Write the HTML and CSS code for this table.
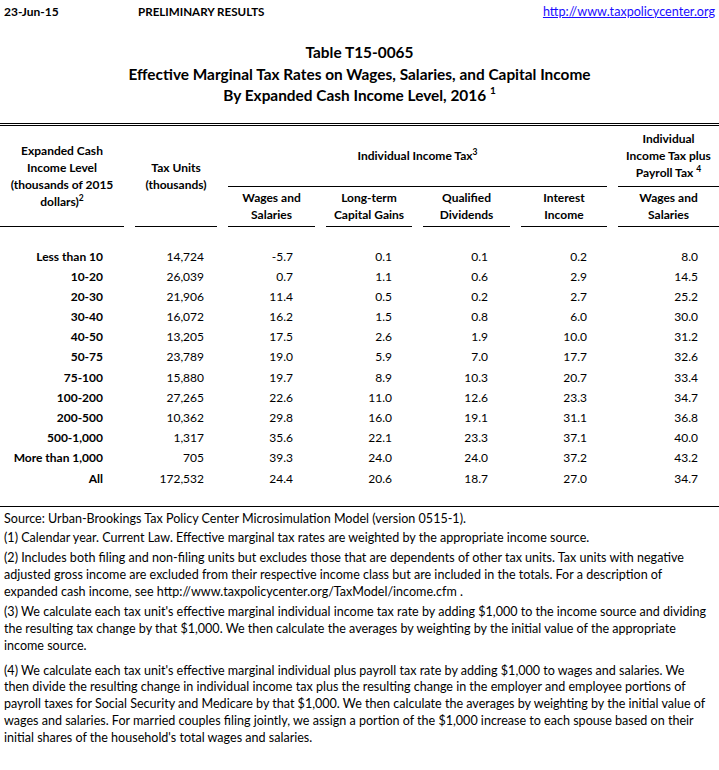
FILE: index.html
```html
<!DOCTYPE html>
<html>
<head>
<meta charset="utf-8">
<link rel="stylesheet" href="styles.css">
</head>
<body>
<div class="page">
  <div class="topbar">
    <span class="date">23-Jun-15</span>
    <span class="prelim">PRELIMINARY RESULTS</span>
    <a class="link" href="#">http://www.taxpolicycenter.org</a>
  </div>

  <div class="title">
    <div>Table T15-0065</div>
    <div>Effective Marginal Tax Rates on Wages, Salaries, and Capital Income</div>
    <div>By Expanded Cash Income Level, 2016 <sup>1</sup></div>
  </div>

  <div class="double-rule"></div>

  <div class="head">
    <div class="hc h-level"><span>Expanded Cash<br>Income Level<br>(thousands of 2015<br>dollars)<sup>2</sup></span></div>
    <div class="hc h-units"><span>Tax Units<br>(thousands)</span></div>
    <div class="hc h-iit"><span>Individual Income Tax<sup>3</sup></span></div>
    <div class="hc h-pay"><span>Individual<br>Income Tax plus<br>Payroll Tax <sup>4</sup></span></div>
    <div class="hc h-sub"><span>Wages and<br>Salaries</span></div>
    <div class="hc h-sub"><span>Long-term<br>Capital Gains</span></div>
    <div class="hc h-sub"><span>Qualified<br>Dividends</span></div>
    <div class="hc h-sub"><span>Interest<br>Income</span></div>
    <div class="hc h-sub"><span>Wages and<br>Salaries</span></div>
  </div>

  <div class="body">
    <div class="row"><div class="lab">Less than 10</div><div class="c2">14,724</div><div class="c3">-5.7</div><div class="c4">0.1</div><div class="c5">0.1</div><div class="c6">0.2</div><div class="c7">8.0</div></div>
    <div class="row"><div class="lab">10-20</div><div class="c2">26,039</div><div class="c3">0.7</div><div class="c4">1.1</div><div class="c5">0.6</div><div class="c6">2.9</div><div class="c7">14.5</div></div>
    <div class="row"><div class="lab">20-30</div><div class="c2">21,906</div><div class="c3">11.4</div><div class="c4">0.5</div><div class="c5">0.2</div><div class="c6">2.7</div><div class="c7">25.2</div></div>
    <div class="row"><div class="lab">30-40</div><div class="c2">16,072</div><div class="c3">16.2</div><div class="c4">1.5</div><div class="c5">0.8</div><div class="c6">6.0</div><div class="c7">30.0</div></div>
    <div class="row"><div class="lab">40-50</div><div class="c2">13,205</div><div class="c3">17.5</div><div class="c4">2.6</div><div class="c5">1.9</div><div class="c6">10.0</div><div class="c7">31.2</div></div>
    <div class="row"><div class="lab">50-75</div><div class="c2">23,789</div><div class="c3">19.0</div><div class="c4">5.9</div><div class="c5">7.0</div><div class="c6">17.7</div><div class="c7">32.6</div></div>
    <div class="row"><div class="lab">75-100</div><div class="c2">15,880</div><div class="c3">19.7</div><div class="c4">8.9</div><div class="c5">10.3</div><div class="c6">20.7</div><div class="c7">33.4</div></div>
    <div class="row"><div class="lab">100-200</div><div class="c2">27,265</div><div class="c3">22.6</div><div class="c4">11.0</div><div class="c5">12.6</div><div class="c6">23.3</div><div class="c7">34.7</div></div>
    <div class="row"><div class="lab">200-500</div><div class="c2">10,362</div><div class="c3">29.8</div><div class="c4">16.0</div><div class="c5">19.1</div><div class="c6">31.1</div><div class="c7">36.8</div></div>
    <div class="row"><div class="lab">500-1,000</div><div class="c2">1,317</div><div class="c3">35.6</div><div class="c4">22.1</div><div class="c5">23.3</div><div class="c6">37.1</div><div class="c7">40.0</div></div>
    <div class="row"><div class="lab">More than 1,000</div><div class="c2">705</div><div class="c3">39.3</div><div class="c4">24.0</div><div class="c5">24.0</div><div class="c6">37.2</div><div class="c7">43.2</div></div>
    <div class="row"><div class="lab">All</div><div class="c2">172,532</div><div class="c3">24.4</div><div class="c4">20.6</div><div class="c5">18.7</div><div class="c6">27.0</div><div class="c7">34.7</div></div>
  </div>

  <div class="notes">
    <p class="n-src">Source: Urban-Brookings Tax Policy Center Microsimulation Model (version 0515-1).</p>
    <p class="n1">(1) Calendar year. Current Law. Effective marginal tax rates are weighted by the appropriate income source.</p>
    <p class="n2">(2) Includes both filing and non-filing units but excludes those that are dependents of other tax units. Tax units with negative<br>adjusted gross income are excluded from their respective income class but are included in the totals. For a description of<br>expanded cash income, see http://www.taxpolicycenter.org/TaxModel/income.cfm .</p>
    <p class="n3">(3) We calculate each tax unit's effective marginal individual income tax rate by adding $1,000 to the income source and dividing<br>the resulting tax change by that $1,000. We then calculate the averages by weighting by the initial value of the appropriate<br>income source.</p>
    <p class="n4">(4) We calculate each tax unit's effective marginal individual plus payroll tax rate by adding $1,000 to wages and salaries. We<br>then divide the resulting change in individual income tax plus the resulting change in the employer and employee portions of<br>payroll taxes for Social Security and Medicare by that $1,000. We then calculate the averages by weighting by the initial value of<br>wages and salaries. For married couples filing jointly, we assign a portion of the $1,000 increase to each spouse based on their<br>initial shares of the household's total wages and salaries.</p>
  </div>
</div>
</body>
</html>
```

FILE: styles.css
```css
html, body {
  margin: 0;
  padding: 0;
  background: #fff;
}
body {
  font-family: Lato, "Open Sans", sans-serif;
  color: #000;
  font-size: 12px;
}
.page {
  width: 719px;
}
.topbar {
  display: grid;
  grid-template-columns: 134px 1fr auto;
  padding: 2px 4px 0 4px;
  height: 18px;
  align-items: center;
  font-size: 12px;
}
.date, .prelim {
  font-weight: bold;
}
.prelim {
  font-size: 11.6px;
}
.link {
  color: #1a0dff;
  text-decoration: underline;
  font-size: 12.6px;
}
.title {
  margin-top: 22px;
  text-align: center;
  font-weight: bold;
  font-size: 15.4px;
  line-height: 21.5px;
}
.title sup {
  font-size: 10px;
  line-height: 0;
  vertical-align: 7px;
}
.double-rule {
  margin-top: 16px;
  border-top: 3px double #000;
}
.head, .row {
  display: grid;
  grid-template-columns: 124px 82px 87px 86px 87px 86px 1fr;
  column-gap: 11px;
}
.head {
  grid-template-rows: 61px 40px;
  font-weight: bold;
  font-size: 12px;
  line-height: 17px;
}
.hc {
  display: flex;
  align-items: center;
  justify-content: center;
  text-align: center;
  border-bottom: 1px solid #000;
}
.hc sup {
  font-size: 8.5px;
  line-height: 0;
  vertical-align: 5px;
}
.h-level {
  grid-column: 1;
  grid-row: 1 / 3;
}
.h-units {
  grid-column: 2;
  grid-row: 1 / 3;
}
.h-iit {
  grid-column: 3 / 7;
  grid-row: 1;
}
.h-pay {
  grid-column: 7;
  grid-row: 1;
}
.h-sub {
  grid-row: 2;
}
.body {
  padding: 20px 0 17px;
  border-bottom: 1px solid #000;
}
.row {
  height: 20.2px;
  line-height: 20.2px;
  font-size: 12px;
  text-align: right;
}
.lab {
  font-weight: bold;
  padding-right: 21px;
}
.c2 { padding-right: 13px; }
.c3 { padding-right: 22px; }
.c4 { padding-right: 20px; }
.c5 { padding-right: 22px; }
.c6 { padding-right: 20px; }
.c7 { padding-right: 21px; }
.notes {
  padding: 3px 4px 0;
  font-size: 12.55px;
  line-height: 17.1px;
}
.notes p {
  margin: 0;
  white-space: nowrap;
}
.n-src { margin-bottom: 2px !important; }
.n1 { margin-bottom: 2.6px !important; }
.n2 { margin-bottom: 3px !important; }
.n3 { margin-bottom: 8.5px !important; }
.n4 { line-height: 16.8px; }
```
